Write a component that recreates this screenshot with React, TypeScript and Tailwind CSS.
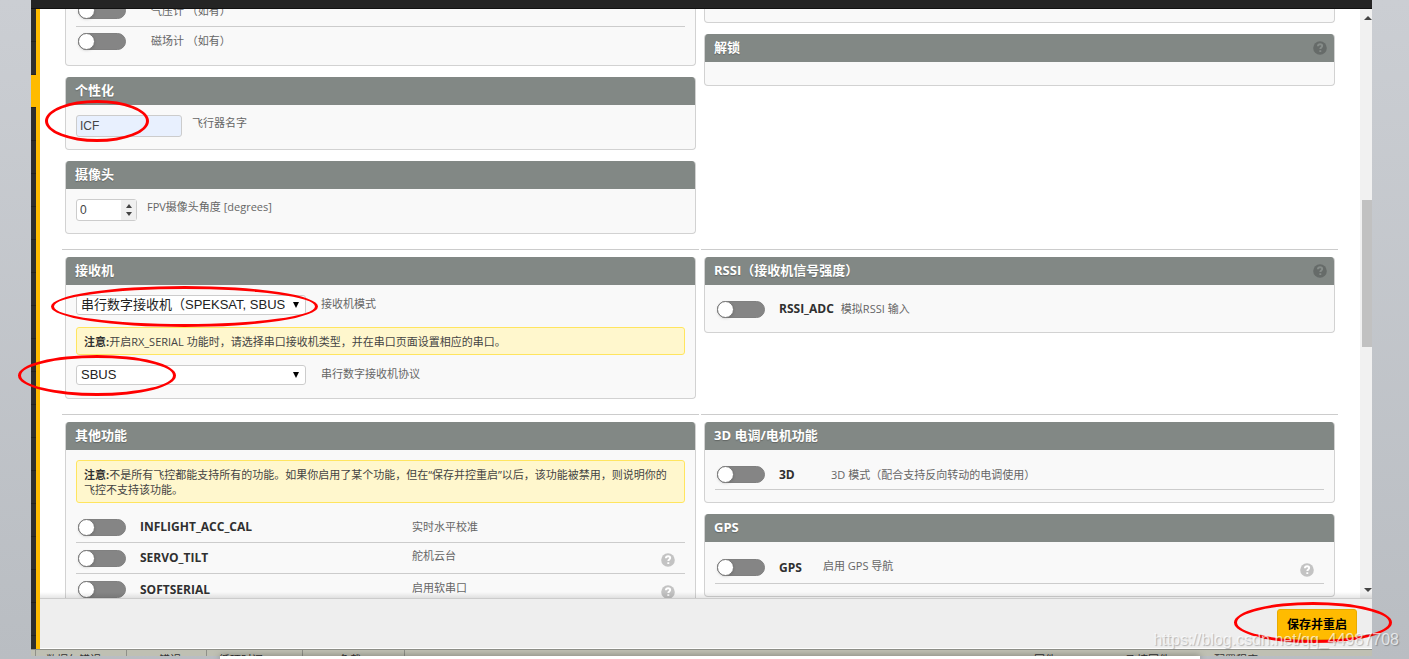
import React from 'react'
import clsx from 'clsx'

const Toggle = ({ id }: { id: string }) => (
  <input
    type="checkbox"
    role="switch"
    id={id}
    className="relative ml-0.5 mr-3.5 h-[17px] w-12 shrink-0 appearance-none rounded-full border border-[#808080] bg-[#858585] before:absolute before:-left-px before:-top-px before:h-[17px] before:w-[17px] before:rounded-full before:border before:border-[#777] before:bg-white before:shadow before:content-['']"
  />
)

const Help = ({ dark }: { dark?: boolean }) => (
  <svg viewBox="0 0 14 14" className="h-3.5 w-3.5 shrink-0">
    <circle cx="7" cy="7" r="6.8" fill={dark ? '#666b69' : '#c3c3c3'} />
    <path
      d="M4.9 5.3C5 3.9 5.9 3.3 7.1 3.3c1.2 0 2.1.7 2.1 1.7 0 1.4-1.9 1.5-1.9 3M7.3 9.3v1.6"
      fill="none"
      stroke={dark ? '#868c89' : '#fff'}
      strokeWidth="1.9"
    />
  </svg>
)

type PanelProps = { title?: string; help?: boolean; className?: string; children?: React.ReactNode }

const Panel = ({ title, help, className = 'pt-2.5 pb-3', children }: PanelProps) => (
  <section className="mx-[3px] mb-[11px] overflow-hidden rounded-[4px] border border-t-0 border-[#d2d2d2] bg-[#f9f9f9]">
    {title && (
      <header className="-mx-px flex h-7 items-center justify-between rounded-t-[3px] bg-[#828885] pl-2.5 pr-2">
        <h2 className="pb-0.5 text-[13px] font-bold leading-4 text-white [text-shadow:0_1px_1px_rgba(0,0,0,0.25)]">{title}</h2>
        {help && <Help dark />}
      </header>
    )}
    <div className={clsx('px-2.5', className)}>{children}</div>
  </section>
)

type FeatureProps = {
  id: string
  name?: string
  text: string
  nameWidth?: string
  help?: boolean
  line?: boolean
  height?: string
}

const Feature = ({ id, name, text, nameWidth, help, line = true, height = 'h-[31px]' }: FeatureProps) => (
  <div className={clsx('flex items-center', height, line && 'border-b border-[#ccc]')}>
    <Toggle id={id} />
    <label htmlFor={id} className="flex items-center">
      {name && <b className={clsx('text-xs text-[#303030]', nameWidth)}>{name}</b>}
      <span className={clsx('leading-4', !name && 'ml-[11px]', help && 'pb-1')}>{text}</span>
    </label>
    {help && (
      <span className="ml-auto mr-2.5 mt-1">
        <Help />
      </span>
    )}
  </div>
)

const Note = ({ children }: { children: React.ReactNode }) => (
  <p className="rounded-[3px] border border-[#ffe55f] bg-[#fff7cd] pb-[5px] pl-[7px] pr-3 pt-1.5 leading-[15px] text-[#444]">
    <b className="text-[#303030]">注意:</b>
    {children}
  </p>
)

const Select = ({ id, label, options }: { id: string; label: string; options: string[] }) => (
  <div className="flex items-start">
    <div className="relative mr-[15px] w-[230px]">
      <select
        id={id}
        className="block h-5 w-full appearance-none overflow-hidden rounded-[3px] border border-[#ccc] bg-white pl-1 pr-5 font-['Liberation_Sans','Noto_Sans_CJK_SC',sans-serif] text-[13px] leading-[18px] text-[#222]"
      >
        {options.map((o) => (
          <option key={o}>{o}</option>
        ))}
      </select>
      <svg viewBox="0 0 6 6" className="pointer-events-none absolute right-[7px] top-[7px] h-1.5 w-1.5">
        <path d="M0 0h6L3 6z" fill="#000" />
      </svg>
    </div>
    <label htmlFor={id} className="leading-[18px]">{label}</label>
  </div>
)

const Section = ({ left, right, first }: { left: React.ReactNode; right: React.ReactNode; first?: boolean }) => (
  <div className="grid grid-cols-2 gap-x-0.5 pb-1">
    <div className={clsx(!first && 'border-t border-[#ccc] pt-[7px]')}>{left}</div>
    <div className={clsx(!first && 'border-t border-[#ccc] pt-[7px]')}>{right}</div>
  </div>
)

const fieldClass =
  "rounded-[3px] border border-[#ccc] px-[3px] font-['Liberation_Sans',sans-serif] text-xs text-[#444]"

const Sidebar = () => (
  <nav className="w-[5px] shrink-0 overflow-hidden bg-[#2e2e2e]">
    {Array.from({ length: 19 }, (_, i) => (
      <div key={i} className={clsx('h-[33px] border-b border-[#222]', i === 2 && 'bg-[#ffbb00]')} />
    ))}
  </nav>
)

const Scrollbar = () => (
  <div className="flex w-3 shrink-0 flex-col items-end bg-[#f1f1f1]">
    <svg viewBox="0 0 8 4" className="mt-[7px] h-1 w-2">
      <path d="M0 4h8L4 0z" fill="#444" />
    </svg>
    <div className="mt-[180px] h-1/4 w-2.5 bg-[#c1c1c1]" />
    <svg viewBox="0 0 8 4" className="mb-1.5 mt-auto h-1 w-2">
      <path d="M0 0h8L4 4z" fill="#444" />
    </svg>
  </div>
)

const StatusBar = () => (
  <div className="flex h-[7px] shrink-0 overflow-hidden border-t border-[#8f9089] bg-[#bfc0b3] text-[11px] leading-[14px] text-[#333]">
    <span className="ml-1 h-4 w-[92px] border-x border-[#8f9089] pl-2.5 pt-[3px]">数据包错误</span>
    <span className="h-4 w-20 border-r border-[#8f9089] pl-8 pt-[3px]">错误</span>
    <span className="h-4 w-24 border-r border-[#8f9089] pl-3 pt-[3px]">循环时间</span>
    <span className="h-4 w-[102px] border-r border-[#8f9089] pl-9 pt-[3px]">负载</span>
    <span className="ml-auto mr-[70px] pt-[3px]">固件</span>
    <span className="mr-11 pt-[3px]">飞控固件</span>
    <span className="mr-[114px] pt-[3px]">配置程序</span>
  </div>
)

const oval = 'pointer-events-none absolute rounded-[50%] border-[3px] border-[#f00]'

export default function App() {
  return (
    <div className="relative flex h-screen flex-col overflow-hidden bg-linear-to-b from-[#cbced3] to-[#b9bdc2] font-['Open_Sans','Noto_Sans_CJK_SC',sans-serif] text-[11px] text-[#666]">
      <div className="ml-[31px] mr-[37px] flex min-h-0 flex-1 flex-col">
        <div className="h-[9px] shrink-0 border-b border-[#111] bg-[#242424]" />
        <div className="flex min-h-0 flex-1">
          <Sidebar />
          <div className="flex min-w-0 flex-1 flex-col border-l-4 border-[#ffbb00]">
            <div className="relative flex min-h-0 flex-1">
              <main className="min-w-0 flex-1 overflow-hidden bg-white px-[22px]">
                <div className="-mt-3.5">
                  <Section
                    first
                    left={
                      <>
                        <Panel className="pb-2.5">
                          <Feature id="baro" text="气压计 （如有）" height="h-8" />
                          <Feature id="mag" text="磁场计 （如有）" height="h-7" line={false} />
                        </Panel>
                        <Panel title="个性化">
                          <div className="flex items-start gap-2.5">
                            <input id="craftName" defaultValue="ICF" className={clsx(fieldClass, 'h-[22px] w-[106px] bg-[#e8f0fe]')} />
                            <label htmlFor="craftName" className="leading-4">飞行器名字</label>
                          </div>
                        </Panel>
                        <Panel title="摄像头">
                          <div className="flex items-start gap-2.5">
                            <div className="relative">
                              <input
                                id="fpvAngle"
                                type="number"
                                defaultValue={0}
                                className={clsx(fieldClass, 'block h-[22px] w-[61px] bg-white [appearance:textfield]')}
                              />
                              <div className="absolute inset-y-px right-px flex w-[15px] flex-col items-center justify-center gap-1 bg-[#f0f0f0]">
                                <button aria-label="+">
                                  <svg viewBox="0 0 6 4" className="block h-1 w-1.5"><path d="M0 4h6L3 0z" fill="#444" /></svg>
                                </button>
                                <button aria-label="-">
                                  <svg viewBox="0 0 6 4" className="block h-1 w-1.5"><path d="M0 0h6L3 4z" fill="#444" /></svg>
                                </button>
                              </div>
                            </div>
                            <label htmlFor="fpvAngle" className="leading-4">FPV摄像头角度 [degrees]</label>
                          </div>
                        </Panel>
                      </>
                    }
                    right={
                      <>
                        <Panel className="h-[27px]" />
                        <Panel title="解锁" help className="h-[23px]" />
                      </>
                    }
                  />
                  <Section
                    left={
                      <Panel title="接收机" className="pb-[13px] pt-2.5">
                        <Select id="rxMode" label="接收机模式" options={['串行数字接收机（SPEKSAT, SBUS, SUMD）']} />
                        <div className="mb-2.5 mt-3">
                          <Note>开启RX_SERIAL 功能时，请选择串口接收机类型，并在串口页面设置相应的串口。</Note>
                        </div>
                        <Select id="serialRx" label="串行数字接收机协议" options={['SBUS', 'IBUS', 'SUMD']} />
                      </Panel>
                    }
                    right={
                      <Panel title="RSSI（接收机信号强度）" help className="pt-2.5 pb-[9px]">
                        <Feature id="rssi" name="RSSI_ADC" nameWidth="pr-[7px]" text="模拟RSSI 输入" line={false} height="h-7" />
                      </Panel>
                    }
                  />
                  <Section
                    left={
                      <Panel title="其他功能">
                        <div className="mb-[9px]">
                          <Note>
                            不是所有飞控都能支持所有的功能。如果你启用了某个功能，但在“保存并控重启”以后，该功能被禁用，则说明你的飞控不支持该功能。
                          </Note>
                        </div>
                        <Feature id="inflight" name="INFLIGHT_ACC_CAL" nameWidth="w-[272px]" text="实时水平校准" />
                        <Feature id="servo" name="SERVO_TILT" nameWidth="w-[272px]" text="舵机云台" help />
                        <Feature id="soft" name="SOFTSERIAL" nameWidth="w-[272px]" text="启用软串口" help height="h-8" />
                      </Panel>
                    }
                    right={
                      <>
                        <Panel title="3D 电调/电机功能">
                          <Feature id="f3d" name="3D" nameWidth="w-[52px]" text="3D 模式（配合支持反向转动的电调使用）" height="h-[30px]" />
                        </Panel>
                        <Panel title="GPS">
                          <Feature id="gps" name="GPS" nameWidth="w-11" text="启用 GPS 导航" help height="h-8" />
                        </Panel>
                      </>
                    }
                  />
                </div>
              </main>
              <Scrollbar />
              <div className="pointer-events-none absolute inset-x-0 bottom-0 h-1.5 bg-linear-to-b from-transparent to-black/10" />
            </div>
            <footer className="flex h-[51px] shrink-0 items-start justify-end border-b border-t border-b-white border-t-[#ccc] bg-[#eee] pr-[15px] pt-2.5">
              <button className="h-[31px] rounded-[3px] border border-[#e8ab00] bg-[#ffbb00] px-[9px] text-xs font-bold text-black">
                保存并重启
              </button>
            </footer>
          </div>
        </div>
        <StatusBar />
      </div>
      <div className="ml-[220px] mr-[209px] h-[3px] shrink-0 bg-white shadow-[0_0_6px_rgba(0,0,0,0.5)]" />

      <div className={clsx(oval, 'left-[45px] top-[100px] h-[42px] w-[104px]')} />
      <div className={clsx(oval, 'left-[51px] top-[286px] h-[41px] w-[267px]')} />
      <div className={clsx(oval, 'left-[18px] top-[355px] h-[41px] w-[158px]')} />
      <div className={clsx(oval, 'bottom-4 right-[17px] h-[41px] w-[158px]')} />
      <span className="pointer-events-none absolute bottom-[7px] right-2.5 font-['Liberation_Sans',sans-serif] text-base leading-6 text-white/70 [text-shadow:1px_1px_1px_rgba(0,0,0,0.25)]">
        https://blog.csdn.net/qq_44987708
      </span>
    </div>
  )
}
